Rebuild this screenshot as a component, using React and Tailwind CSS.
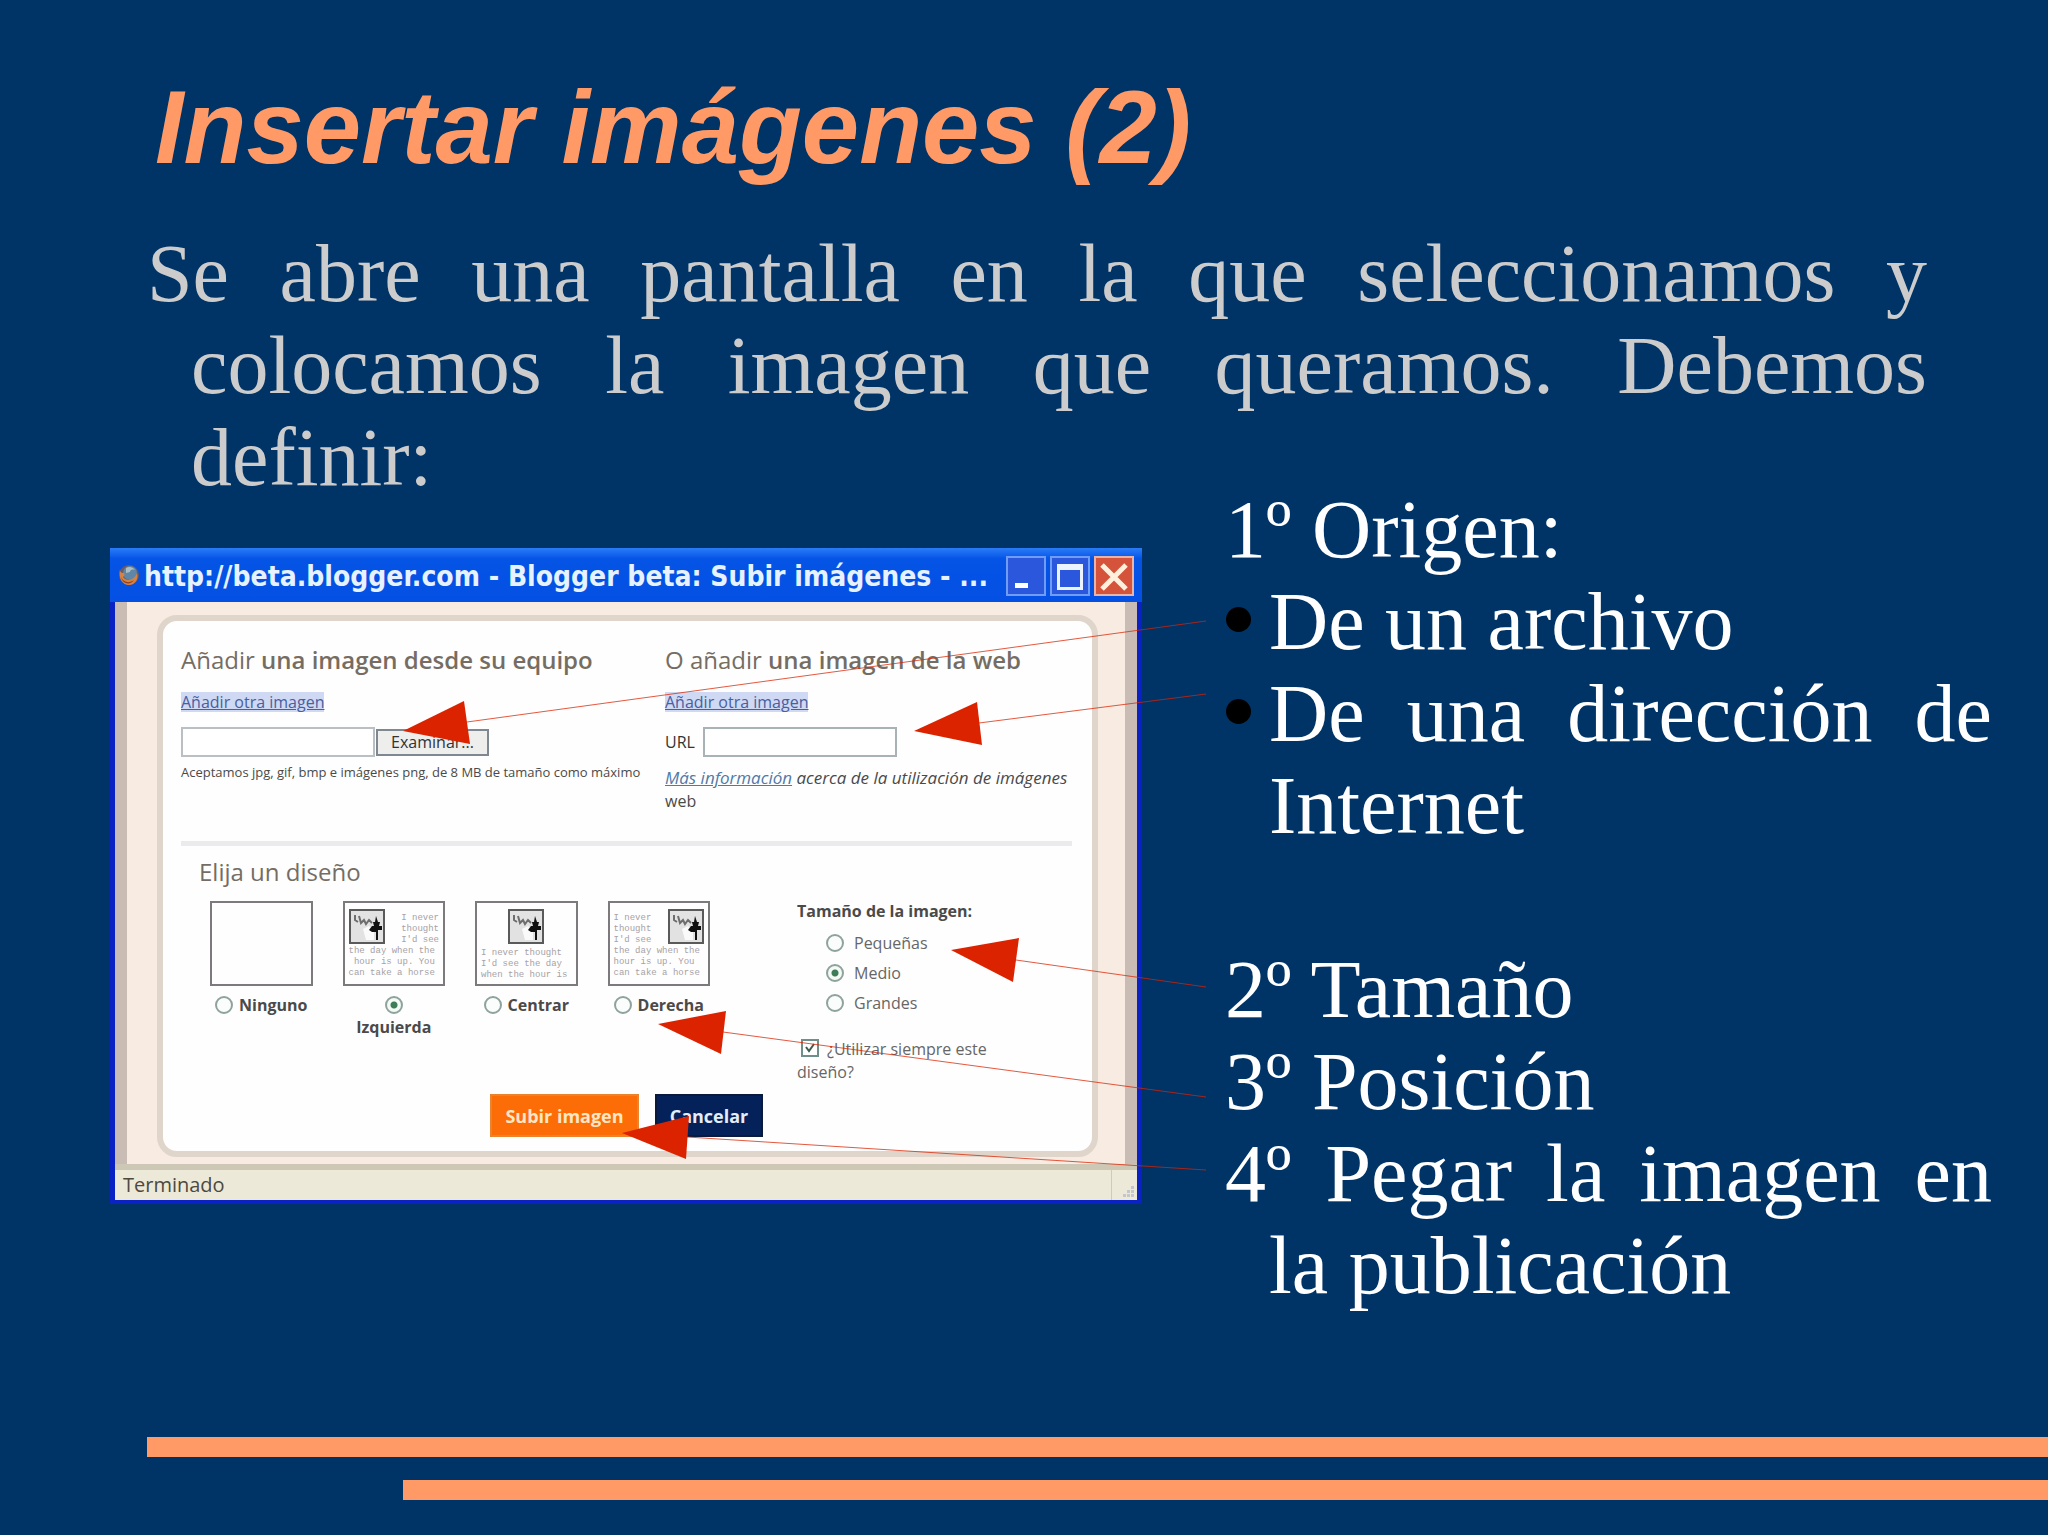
import React from "react";

const UI = "font-['Open_Sans','Noto_Sans',sans-serif]";

function FirefoxIcon() {
  return (
    <svg viewBox="0 0 22 22" className="size-[22px] shrink-0" aria-hidden="true">
      <circle cx="11" cy="11" r="10" fill="#6b5a63" />
      <circle cx="12" cy="9" r="7" fill="#5d86a8" />
      <path d="M8 4c3-2 7-1 9 2-3-1-5 0-5 2l-4 1z" fill="#a9bfc4" />
      <path
        d="M2 5c0 3 1 4 4 4 1 2 0 3-1 4 2 3 6 4 9 2 2-1 4-3 5-6 2 6-2 12-8 12S0 15 2 5z"
        fill="#d9813f"
      />
      <path d="M3 13c2 5 8 7 13 3-3 5-11 5-13-3z" fill="#8a3f22" />
    </svg>
  );
}

function TitleButton({ label, close, children }) {
  return (
    <button
      type="button"
      aria-label={label}
      className={
        close
          ? "flex size-10 items-center justify-center border-2 border-[#e9b3a8] bg-[#d4533a]"
          : "flex size-10 items-center justify-center border-2 border-[#6f9cf5] bg-[#2b57dc]"
      }
    >
      <svg viewBox="0 0 36 36" className="size-9" aria-hidden="true">
        {children}
      </svg>
    </button>
  );
}

function Picture({ className }) {
  return (
    <svg viewBox="0 0 36 35" className={className} aria-hidden="true">
      <rect x="1" y="1" width="34" height="33" fill="#e2e2e2" stroke="#5a5a5a" strokeWidth="2" />
      <path d="M14 20l6-3 5 4v10h-8z" fill="#fafafa" />
      <path d="M6 6v5l3 2M10 7l2 7 3-3 2 4 3-4 3 3" fill="none" stroke="#6e6e6e" strokeWidth="2" />
      <path d="M27 7l2 6h2l-1 4h3v4h-4v10h-2v-8h-4l-3-2 3-4h2l-1-4h2z" fill="#111" />
    </svg>
  );
}

function Thumb({ kind }) {
  return (
    <div className="h-[85px] w-full overflow-hidden border-2 border-[#7d7a7d] bg-[#fefefe] px-1 pt-1.5 font-['Liberation_Mono',monospace] text-[9px] leading-[11px] font-normal whitespace-pre text-[#a6a2a6]">
      {kind === "left" && (
        <>
          <div className="flex justify-between">
            <Picture className="h-[35px] w-9" />
            <p className="pt-1">{"I never\nthought\nI'd see"}</p>
          </div>
          <p>{"the day when the\n hour is up. You\ncan take a horse"}</p>
        </>
      )}
      {kind === "center" && (
        <>
          <Picture className="mx-auto mb-1 h-[35px] w-9" />
          <p>{"I never thought\nI'd see the day\nwhen the hour is"}</p>
        </>
      )}
      {kind === "right" && (
        <>
          <div className="flex justify-between">
            <p className="pt-1">{"I never\nthought\nI'd see"}</p>
            <Picture className="h-[35px] w-9" />
          </div>
          <p>{"the day when the\nhour is up. You\ncan take a horse"}</p>
        </>
      )}
    </div>
  );
}

function Radio({ name, checked }) {
  return (
    <input
      type="radio"
      name={name}
      defaultChecked={checked}
      className="size-[18px] shrink-0 appearance-none rounded-full border-2 border-[#8fa39d] bg-[#fbfdfc] checked:bg-[radial-gradient(circle,#3f7d58_3px,#f4faf6_4px)]"
    />
  );
}

const LAYOUTS = [
  { label: "Ninguno", kind: "none" },
  { label: "Izquierda", kind: "left", checked: true },
  { label: "Centrar", kind: "center" },
  { label: "Derecha", kind: "right" },
];

const SIZES = [{ label: "Pequeñas" }, { label: "Medio", checked: true }, { label: "Grandes" }];

function Dialog() {
  return (
    <div className={`${UI} border-x-[5px] border-b-4 border-[#0a22c4] bg-[#0a22c4]`}>
      <div className="-mx-[5px] flex h-[54px] items-center bg-gradient-to-b from-[#2a7cf8] via-[#0454e6] via-20% to-[#0450e4] pr-2 pl-2">
        <FirefoxIcon />
        <p className="ml-1 flex-1 overflow-hidden pt-1 font-['DejaVu_Sans_Condensed','DejaVu_Sans',sans-serif] text-[28px] leading-9 font-bold whitespace-nowrap text-[#e6f2ff]">
          http://beta.blogger.com - Blogger beta: Subir imágenes - ...
        </p>
        <div className="flex gap-1 pt-0.5">
          <TitleButton label="Minimizar">
            <rect x="7" y="25" width="13" height="5" fill="#fff" />
          </TitleButton>
          <TitleButton label="Maximizar">
            <path d="M5 6h26v26H5zM8 12v17h20V12z" fill="#eaf3ff" fillRule="evenodd" />
          </TitleButton>
          <TitleButton label="Cerrar" close>
            <path d="M6 7l24 24M30 7L6 31" stroke="#fff0dc" strokeWidth="5" />
          </TitleButton>
        </div>
      </div>

      <div className="border-x-[12px] border-[#c9bcb5] bg-[#f7ebe2] pt-[13px] pr-[27px] pb-[7px] pl-[30px]">
        <form
          onSubmit={(e) => e.preventDefault()}
          className="rounded-[20px] border-[6px] border-[#e0d5ca] bg-[#fefefe] pt-[23px] pr-5 pb-[14px] pl-[18px] text-[#4a4a4a]"
        >
          <div className="grid grid-cols-[484px_1fr]">
            <section>
              <h2 className="text-2xl leading-8 font-semibold text-[#756d63]">
                <span className="font-normal">Añadir</span> una imagen desde su equipo
              </h2>
              <p className="mt-[14px] text-base leading-6">
                <a href="#equipo" className="inline-block bg-[#cfd9f3] leading-5 text-[#4a5ea0] underline">
                  Añadir otra imagen
                </a>
              </p>
              <div className="mt-[13px] flex h-[30px] items-center gap-px">
                <input
                  type="text"
                  aria-label="Archivo"
                  className="h-[30px] w-[194px] border-2 border-[#b9bfc2] bg-white"
                />
                <button
                  type="button"
                  className="h-[27px] w-[113px] border-2 border-[#7f8790] bg-[#eeeeec] text-base leading-5 text-[#333]"
                >
                  Examinar...
                </button>
              </div>
              <p className="mt-[5px] text-[13px] leading-5 whitespace-nowrap">
                Aceptamos jpg, gif, bmp e imágenes png, de 8 MB de tamaño como máximo
              </p>
            </section>
            <section>
              <h2 className="text-2xl leading-8 font-semibold text-[#756d63]">
                <span className="font-normal">O añadir</span> una imagen de la web
              </h2>
              <p className="mt-[14px] text-base leading-6">
                <a href="#web" className="inline-block bg-[#cfd9f3] leading-5 text-[#4a5ea0] underline">
                  Añadir otra imagen
                </a>
              </p>
              <label className="mt-[13px] flex h-[30px] items-center gap-2 text-base text-[#333]">
                URL
                <input type="text" className="h-[30px] w-[194px] border-2 border-[#a9b3b5] bg-white" />
              </label>
              <p className="mt-[9px] text-[17px] leading-[23px] italic">
                <a href="#info" className="text-[#4f7aa8] underline">
                  Más información
                </a>{" "}
                acerca de la utilización de imágenes <span className="text-base not-italic">web</span>
              </p>
            </section>
          </div>

          <hr className="mt-[28px] h-[5px] border-0 bg-[#ebebee]" />

          <div className="grid grid-cols-[616px_1fr]">
            <fieldset className="pl-[18px]">
              <legend className="pt-2.5 text-2xl leading-8 text-[#756d63]">Elija un diseño</legend>
              <div className="mt-[13px] ml-[11px] grid w-[500px] grid-cols-4 gap-[30px]">
                {LAYOUTS.map((l) => (
                  <label key={l.label} className="text-base leading-[22px] font-bold">
                    <Thumb kind={l.kind} />
                    <span className="mt-2 flex flex-wrap items-center justify-center gap-x-1.5">
                      <span className={l.checked ? "flex h-[22px] w-full items-center justify-center" : "flex items-center"}>
                        <Radio name="layout" checked={l.checked} />
                      </span>
                      {l.label}
                    </span>
                  </label>
                ))}
              </div>
            </fieldset>
            <div className="pt-[53px]">
              <fieldset>
                <legend className="text-base leading-6 font-bold">Tamaño de la imagen:</legend>
                <div className="mt-[5px] pl-[29px] text-base text-[#666]">
                  {SIZES.map((s) => (
                    <label key={s.label} className="flex h-[30px] items-center gap-2.5">
                      <Radio name="size" checked={s.checked} />
                      {s.label}
                    </label>
                  ))}
                </div>
              </fieldset>
              <label className="mt-5 block w-[220px] text-base leading-[23px] text-[#666]">
                <span className="relative mr-2 ml-1 inline-block size-[18px] align-[-2px]">
                  <input
                    type="checkbox"
                    defaultChecked
                    className="block size-[18px] appearance-none border-2 border-[#6f8f8a] bg-white"
                  />
                  <svg viewBox="0 0 18 18" className="pointer-events-none absolute inset-0" aria-hidden="true">
                    <path d="M5 8l3 4 5-7" fill="none" stroke="#3c5c50" strokeWidth="2" />
                  </svg>
                </span>
                ¿Utilizar siempre este diseño?
              </label>
            </div>
          </div>

          <div className="mt-[10px] flex justify-center gap-4 text-lg font-bold">
            <button type="submit" className="h-[43px] w-[149px] border-2 border-[#e9842c] bg-[#fc6d08] text-[#ffe6c4]">
              Subir imagen
            </button>
            <button type="button" className="h-[43px] w-[108px] border-2 border-[#0a1a3c] bg-[#04215a] text-[#e3edfb]">
              Cancelar
            </button>
          </div>
        </form>
      </div>

      <div className="flex h-9 border-t-[6px] border-[#cdc8b6] bg-[#ece9d8] text-xl leading-[30px] text-[#4c4a40]">
        <p className="flex-1 pl-2">Terminado</p>
        <span className="flex w-[26px] items-end justify-end border-l border-[#cfcbb8] p-px">
          <svg viewBox="0 0 14 14" className="size-3.5" aria-hidden="true">
            <path d="M9 1h3v3H9zM5 5h3v3H5zM9 5h3v3H9zM1 9h3v3H1zM5 9h3v3H5zM9 9h3v3H9z" fill="#c4c6cc" />
          </svg>
        </span>
      </div>
    </div>
  );
}

function Arrows() {
  return (
    <svg
      viewBox="110 548 1100 655"
      className="pointer-events-none absolute top-0 left-0 h-[655px] w-[1100px]"
      aria-hidden="true"
    >
      <g stroke="#dc2300" strokeWidth="1" opacity="0.75">
        <path d="M467 722L1206 621" />
        <path d="M979 723L1206 694" />
        <path d="M1016 960L1206 987" />
        <path d="M723 1032L1206 1097" />
        <path d="M687 1137L1206 1170" />
      </g>
      <g fill="#dc2300">
        <path d="M403 731L464 701L470 744z" />
        <path d="M914 731L977 702L982 745z" />
        <path d="M951 950L1019 938L1013 982z" />
        <path d="M658 1024L726 1011L721 1054z" />
        <path d="M622 1133L689 1116L686 1159z" />
      </g>
    </svg>
  );
}

function Bullet({ children }) {
  return (
    <li className="flex">
      <span className="mt-[31px] ml-px size-[25px] shrink-0 rounded-full bg-black" />
      <span className="ml-[18px] flex-1">{children}</span>
    </li>
  );
}

export default function App() {
  return (
    <main className="flex min-h-screen flex-col overflow-hidden bg-[#003366] font-['Liberation_Serif',serif] text-[82px] leading-[92px]">
      <h1 className="pt-[68px] pl-[155px] font-['Liberation_Sans',sans-serif] text-[103px] leading-[120px] font-bold text-[#ff9966] italic">
        Insertar imágenes (2)
      </h1>
      <p className="mt-[40px] mr-[121px] ml-[191px] -indent-[44px] text-justify text-[#cccccc]">
        Se abre una pantalla en la que seleccionamos y colocamos la imagen que queramos. Debemos definir:
      </p>

      <div className="flex items-start pr-14 pl-[110px]">
        <div className="relative mt-[44px] w-[1032px] shrink-0">
          <Dialog />
          <Arrows />
        </div>
        <div className="-mt-[20px] ml-[83px] flex-1 text-justify text-white">
          <p>1º Origen:</p>
          <ul>
            <Bullet>De un archivo</Bullet>
            <Bullet>De una dirección de Internet</Bullet>
          </ul>
          <p className="mt-[92px]">2º Tamaño</p>
          <p>3º Posición</p>
          <p className="pl-[44px] -indent-[44px]">4º Pegar la imagen en la publicación</p>
        </div>
      </div>

      <footer className="mt-auto flex flex-col gap-[23px] pb-[35px]">
        <div className="ml-[147px] h-5 bg-[#ff9966]" />
        <div className="ml-[403px] h-5 bg-[#ff9966]" />
      </footer>
    </main>
  );
}
